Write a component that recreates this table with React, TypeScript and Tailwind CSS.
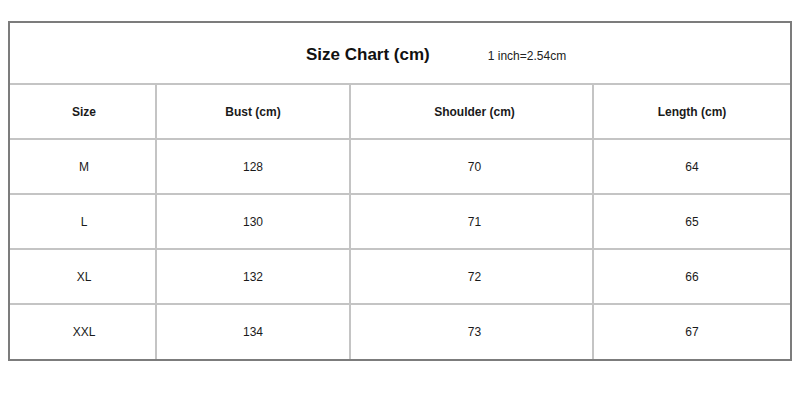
const rows = [
  ["M", "128", "70", "64"],
  ["L", "130", "71", "65"],
  ["XL", "132", "72", "66"],
  ["XXL", "134", "73", "67"],
]

const headers = ["Size", "Bust (cm)", "Shoulder (cm)", "Length (cm)"]

const cols = [
  "w-[147px] pl-[3px]",
  "w-[194px]",
  "w-[243px] pl-[6px]",
  "flex-1",
]

function Row({ cells, bold, last }: { cells: string[]; bold?: boolean; last?: boolean }) {
  return (
    <div
      className={
        "flex " + (last ? "h-[54px]" : "h-[55px] border-b-2 border-[#c4c4c4]")
      }
    >
      {cells.map((c, i) => (
        <div
          key={i}
          className={
            "flex items-center justify-center text-[12px] text-[#1a1a1a] " +
            (bold ? "font-bold " : "") +
            cols[i] +
            (i < 3 ? " border-r-2 border-[#c4c4c4]" : "")
          }
        >
          {c}
        </div>
      ))}
    </div>
  )
}

export default function App() {
  return (
    <div
      className="w-[800px] h-[400px] bg-white pt-[21px] pl-[8px]"
      style={{ fontFamily: '"Liberation Sans", Arial, sans-serif' }}
    >
      <div className="w-[784px] border-2 border-[#7c7c7c]">
        <div className="h-[62px] flex items-center border-b-2 border-[#c4c4c4] pl-[296px] pt-[3px]">
          <span className="text-[17px] font-bold text-[#111]">Size Chart (cm)</span>
          <span className="ml-[58px] text-[12px] text-[#222] mt-[2px]">1 inch=2.54cm</span>
        </div>
        <Row cells={headers} bold />
        {rows.map((r, i) => (
          <Row key={i} cells={r} last={i === rows.length - 1} />
        ))}
      </div>
    </div>
  )
}
